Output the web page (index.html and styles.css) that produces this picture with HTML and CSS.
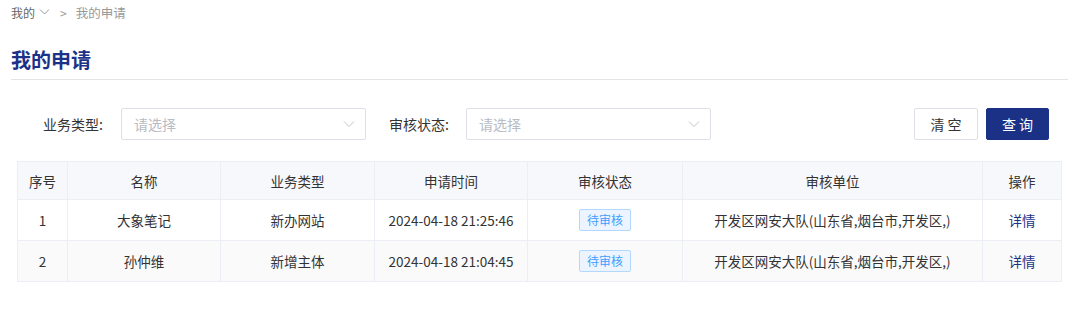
FILE: index.html
```html
<!DOCTYPE html>
<html lang="zh-CN">
<head>
    <meta charset="UTF-8">
    <meta name="viewport" content="width=device-width, initial-scale=1.0">
    <title>我的申请</title>
    <link rel="stylesheet" href="styles.css">
</head>
<body>
    <div class="page">
        <div class="breadcrumb">
            <span class="crumb">我的</span>
            <svg class="crumb-arrow" width="11" height="10" viewBox="0 0 11 10"><path d="M1 2.5 L5.5 7 L10 2.5" fill="none" stroke="#999" stroke-width="1"/></svg>
            <span class="sep">&gt;</span>
            <span class="crumb current">我的申请</span>
        </div>

        <h1 class="title">我的申请</h1>

        <div class="filters">
            <div class="field">
                <label>业务类型:</label>
                <div class="select">
                    <span class="placeholder">请选择</span>
                    <svg width="12" height="12" viewBox="0 0 12 12"><path d="M1 3.5 L6 8.5 L11 3.5" fill="none" stroke="#c0c4cc" stroke-width="1"/></svg>
                </div>
            </div>
            <div class="field">
                <label>审核状态:</label>
                <div class="select">
                    <span class="placeholder">请选择</span>
                    <svg width="12" height="12" viewBox="0 0 12 12"><path d="M1 3.5 L6 8.5 L11 3.5" fill="none" stroke="#c0c4cc" stroke-width="1"/></svg>
                </div>
            </div>
            <div class="actions">
                <button class="btn btn-plain">清 空</button>
                <button class="btn btn-primary">查 询</button>
            </div>
        </div>

        <table class="list">
            <thead>
                <tr>
                    <th class="c-no">序号</th>
                    <th class="c-name">名称</th>
                    <th class="c-type">业务类型</th>
                    <th class="c-time">申请时间</th>
                    <th class="c-state">审核状态</th>
                    <th class="c-unit">审核单位</th>
                    <th class="c-op">操作</th>
                </tr>
            </thead>
            <tbody>
                <tr>
                    <td>1</td>
                    <td>大象笔记</td>
                    <td>新办网站</td>
                    <td>2024-04-18 21:25:46</td>
                    <td><span class="tag">待审核</span></td>
                    <td>开发区网安大队(山东省,烟台市,开发区,)</td>
                    <td><a class="link" href="#">详情</a></td>
                </tr>
                <tr>
                    <td>2</td>
                    <td>孙仲维</td>
                    <td>新增主体</td>
                    <td>2024-04-18 21:04:45</td>
                    <td><span class="tag">待审核</span></td>
                    <td>开发区网安大队(山东省,烟台市,开发区,)</td>
                    <td><a class="link" href="#">详情</a></td>
                </tr>
            </tbody>
        </table>
    </div>
</body>
</html>
```

FILE: styles.css
```css
* {
    margin: 0;
    padding: 0;
    box-sizing: border-box;
}
body {
    font-family: "Noto Sans CJK SC", "Noto Sans", sans-serif;
    font-size: 14px;
    color: #333;
    background: #fff;
}
.page {
    padding: 0 14px 0 11px;
}
.breadcrumb {
    display: flex;
    align-items: center;
    height: 24px;
    font-size: 12px;
    color: #666;
}
.crumb-arrow {
    margin-left: 4px;
}
.sep {
    margin: 0 9px 0 10px;
    color: #999;
}
.crumb.current {
    font-size: 12.5px;
    color: #999;
}
.title {
    margin-top: 22px;
    padding-bottom: 5px;
    font-size: 20px;
    line-height: 28px;
    font-weight: bold;
    color: #1c3289;
    border-bottom: 1px solid #e4e4e4;
}
.filters {
    display: flex;
    align-items: center;
    margin: 28px 19px 0 32px;
}
.field {
    display: flex;
    align-items: center;
    margin-right: 23px;
}
.field label {
    width: 78px;
    color: #333;
}
.field + .field label {
    width: 77px;
}
.select {
    display: flex;
    align-items: center;
    justify-content: space-between;
    width: 245px;
    height: 32px;
    padding: 0 10px 0 12px;
    border: 1px solid #dcdfe6;
    border-radius: 2px;
}
.placeholder {
    color: #b8bcc4;
}
.actions {
    margin-left: auto;
    display: flex;
    gap: 8px;
}
.btn {
    height: 32px;
    font-family: inherit;
    font-size: 14px;
    border-radius: 2px;
    cursor: pointer;
}
.btn-plain {
    width: 64px;
    background: #fff;
    color: #333;
    border: 1px solid #dcdfe6;
}
.btn-primary {
    width: 63px;
    background: #1a3185;
    color: #fff;
    border: 1px solid #1a3185;
}
.list {
    width: 1044px;
    margin: 21px 0 0 6px;
    border-collapse: collapse;
    table-layout: fixed;
    text-align: center;
    font-size: 13.5px;
}
.list th,
.list td {
    border: 1px solid #ebeef5;
    height: 41px;
    font-weight: normal;
    color: #333;
}
.list th {
    height: 38px;
    background: #f7f8fc;
}
.list tbody tr:nth-child(2) td {
    background: #fafafa;
}
.c-no { width: 50px; }
.c-name { width: 153px; }
.c-type { width: 154px; }
.c-time { width: 153px; }
.c-state { width: 155px; }
.c-unit { width: 300px; }
.c-op { width: 79px; }
.tag {
    display: inline-block;
    height: 22px;
    line-height: 20px;
    padding: 0 7px;
    font-size: 12px;
    color: #409eff;
    background: #ecf5ff;
    border: 1px solid #b3d8ff;
    border-radius: 2px;
}
.link {
    color: #1c3289;
    text-decoration: none;
}
```
